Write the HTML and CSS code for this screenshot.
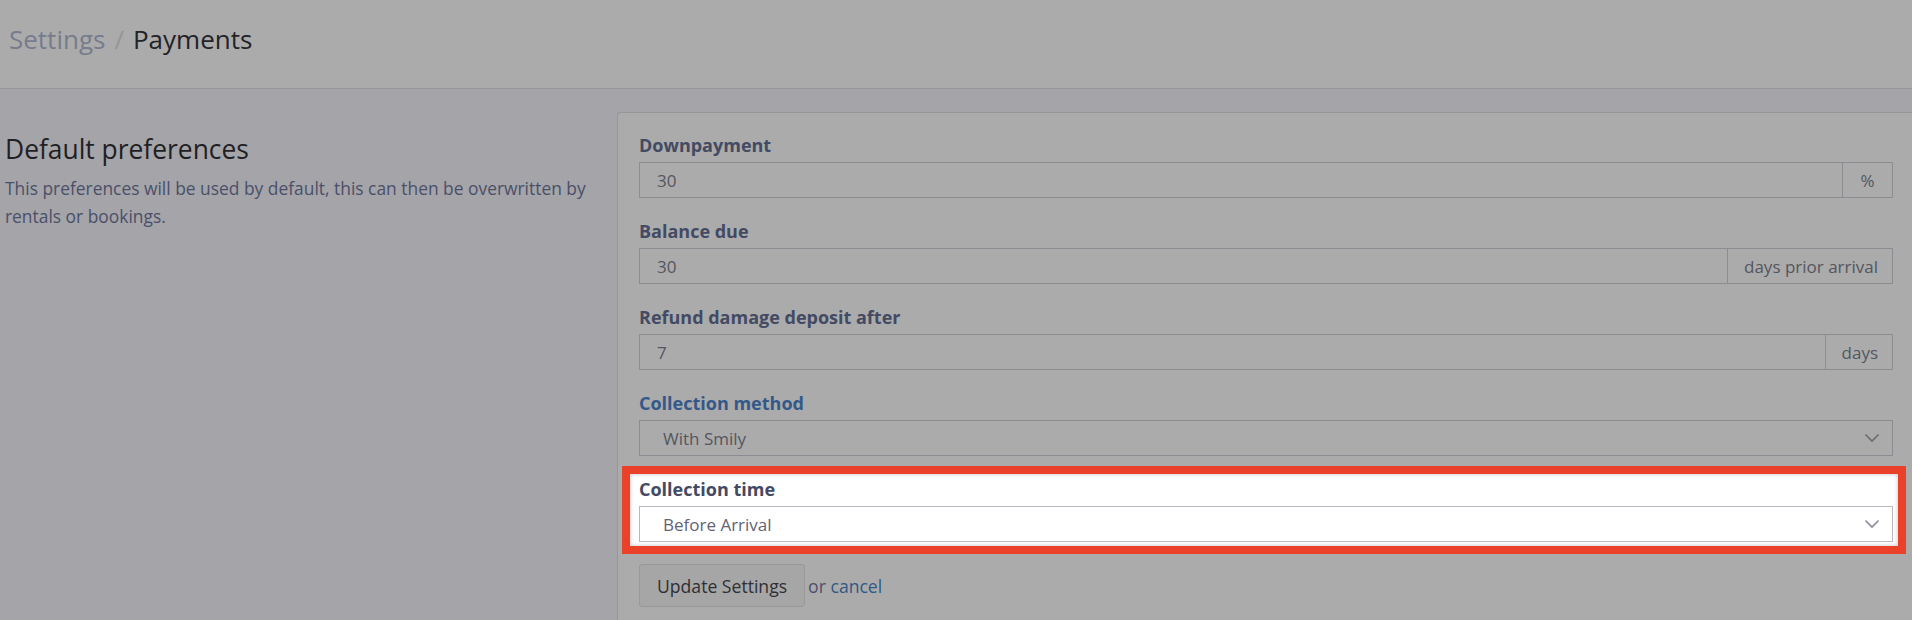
FILE: index.html
```html
<!DOCTYPE html>
<html>
<head>
<meta charset="utf-8">
<link rel="stylesheet" href="styles.css">
</head>
<body>
<header class="topbar">
  <h1 class="crumbs"><span class="crumb-muted">Settings</span><span class="crumb-sep">/</span><span class="crumb-current">Payments</span></h1>
</header>
<main class="content">
  <section class="intro">
    <h2 class="intro-title">Default preferences</h2>
    <p class="intro-text">This preferences will be used by default, this can then be overwritten by rentals or bookings.</p>
  </section>
  <section class="panel">
    <div class="field">
      <label class="field-label">Downpayment</label>
      <div class="input-group">
        <div class="input">30</div>
        <div class="addon addon-pct">%</div>
      </div>
    </div>
    <div class="field">
      <label class="field-label">Balance due</label>
      <div class="input-group">
        <div class="input">30</div>
        <div class="addon">days prior arrival</div>
      </div>
    </div>
    <div class="field">
      <label class="field-label">Refund damage deposit after</label>
      <div class="input-group">
        <div class="input">7</div>
        <div class="addon">days</div>
      </div>
    </div>
    <div class="field">
      <label class="field-label field-label-blue">Collection method</label>
      <div class="select">
        <span>With Smily</span>
        <svg class="chev" width="16" height="10" viewBox="0 0 16 10"><path d="M1.5 1.5 L8 8 L14.5 1.5" fill="none" stroke="currentColor" stroke-width="1.6"/></svg>
      </div>
    </div>
    <div class="highlight">
      <div class="highlight-inner">
        <label class="field-label">Collection time</label>
        <div class="select select-white">
          <span>Before Arrival</span>
          <svg class="chev" width="16" height="10" viewBox="0 0 16 10"><path d="M1.5 1.5 L8 8 L14.5 1.5" fill="none" stroke="currentColor" stroke-width="1.6"/></svg>
        </div>
      </div>
    </div>
    <div class="actions">
      <button class="btn">Update Settings</button>
      <span class="or">or <a class="cancel" href="#">cancel</a></span>
    </div>
  </section>
</main>
</body>
</html>
```
FILE: styles.css
```css
* { box-sizing: border-box; }
html, body { margin: 0; padding: 0; }
body {
  width: 1912px;
  height: 620px;
  overflow: hidden;
  background: #a4a4a9;
  font-family: "Open Sans", "Noto Sans", sans-serif;
  color: #444;
}
.topbar {
  height: 89px;
  background: #ababab;
  border-bottom: 1px solid #98989c;
  display: flex;
  align-items: center;
  padding: 0 0 10px 9px;
}
.crumbs {
  margin: 0;
  font-size: 26px;
  font-weight: 400;
  line-height: 34px;
}
.crumb-muted { color: #777b8d; }
.crumb-sep { color: #95959a; margin: 0 9px; }
.crumb-current { color: #232328; }
.content {
  display: flex;
  align-items: flex-start;
  padding-top: 23px;
}
.intro {
  width: 617px;
  flex: none;
  padding: 20px 24px 0 5px;
}
.intro-title {
  margin: 0;
  font-size: 26.4px;
  font-weight: 400;
  line-height: 34px;
  color: #1f1f24;
}
.intro-text {
  margin: 8px 0 0;
  font-size: 17.4px;
  line-height: 28px;
  color: #4b5069;
}
.panel {
  flex: 1;
  min-height: 530px;
  background: #ababab;
  border-left: 1px solid #97979b;
  border-top: 1px solid #97979b;
  border-top-left-radius: 4px;
  padding: 20px 19px 0 21px;
}
.field { margin-bottom: 21px; }
.field-label {
  display: block;
  font-size: 18px;
  font-weight: 700;
  line-height: 24px;
  color: #434a63;
  margin-bottom: 5px;
}
.field-label-blue { color: #33598a; }
.input-group {
  display: flex;
  height: 36px;
  border: 1px solid #8c8c92;
}
.input {
  flex: 1;
  display: flex;
  align-items: center;
  padding-left: 17px;
  font-size: 17px;
  color: #54565f;
}
.addon {
  display: flex;
  align-items: center;
  padding: 0 14px 0 16px;
  border-left: 1px solid #8c8c92;
  font-size: 17px;
  color: #54565f;
}
.addon-pct { width: 50px; justify-content: center; padding: 0; }
.select {
  height: 36px;
  border: 1px solid #8c8c92;
  display: flex;
  align-items: center;
  justify-content: space-between;
  padding: 0 12px 0 23px;
  font-size: 17px;
  color: #54565f;
}
.chev { color: #6a6a72; }
.field:nth-child(4) { margin-bottom: 10px; }
.highlight {
  margin: 0 -13px 10px -17px;
  border: 8px solid #e9412a;
}
.highlight-inner {
  background: #fff;
  padding: 3px 5px 4px 9px;
  box-shadow: inset 0 0 4px rgba(0,0,0,0.25);
}
.select-white {
  background: #fff;
  border-color: #b8b8c0;
  color: #626472;
}
.select-white .chev { color: #8a8a94; }
.actions {
  display: flex;
  align-items: center;
  gap: 3px;
}
.btn {
  height: 43px;
  padding: 0 17px;
  font-family: "Open Sans", "Noto Sans", sans-serif;
  font-size: 17.6px;
  color: #2e2e34;
  background: #a6a6a6;
  border: 1px solid #999;
  border-radius: 3px;
}
.or {
  font-size: 17.6px;
  color: #4b5069;
}
.cancel {
  color: #2f5a85;
  text-decoration: none;
}
```
